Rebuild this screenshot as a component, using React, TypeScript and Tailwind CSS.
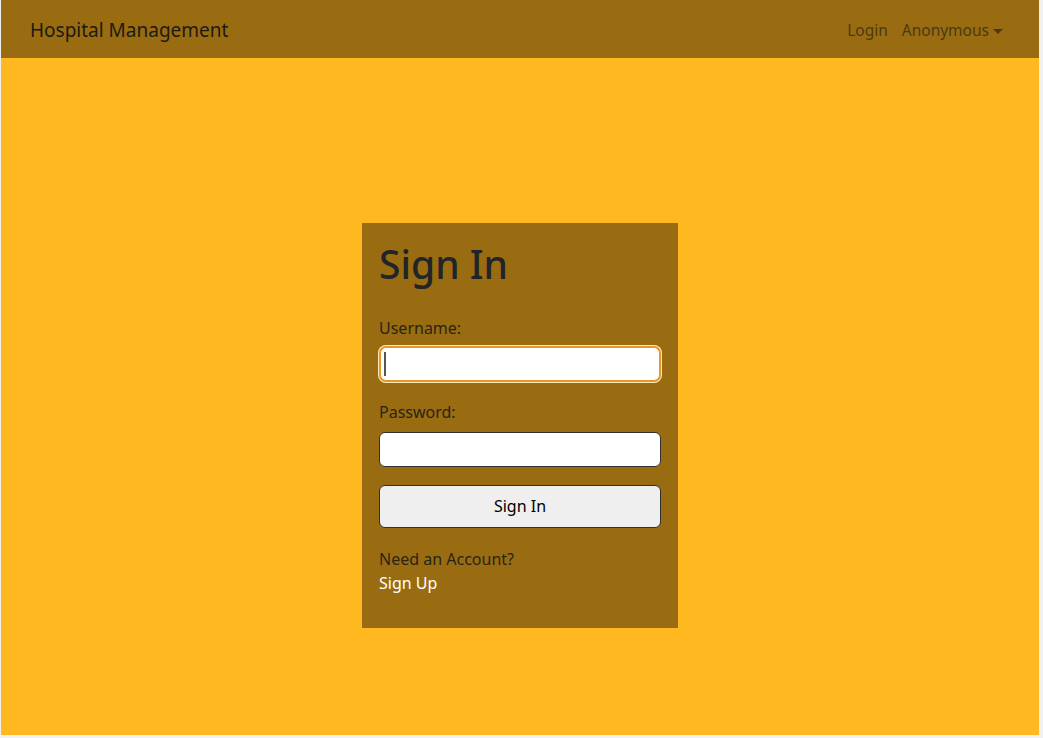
import React from "react";

const font = { fontFamily: '"Noto Sans", "Open Sans", sans-serif' };

const NavBar = () => {
  return (
    <nav className="flex h-[58px] items-center justify-between bg-[#996c11] pl-[29px] pr-[36px] pt-[3px]">
      <span className="text-[19px] text-[#1e1a10]">Hospital Management</span>
      <div className="flex items-center gap-[14px] text-[15.5px] text-[#4a3a14]">
        <span>Login</span>
        <span className="flex items-center">
          Anonymous
          <span className="ml-[4px] mt-[2px] h-0 w-0 border-x-[5px] border-t-[5px] border-x-transparent border-t-[#4a3a14]" />
        </span>
      </div>
    </nav>
  );
};

const SignInCard = () => {
  return (
    <div className="w-[316px] bg-[#996c11] px-[17px] pt-[18px] pb-[33px]">
      <h1 className="text-[39px] font-medium leading-[1.2] text-[#212529]">Sign In</h1>
      <label className="mt-[28px] block text-[16px] text-[#2a2414]">Username:</label>
      <div className="relative mt-[6px]">
        <input className="h-[36px] w-full rounded-[7px] border-2 border-[#e29b2a] bg-white px-[4px] outline-none ring-1 ring-[#ffe9b8]" />
        <span className="absolute left-[5px] top-[6px] h-[24px] w-[2px] bg-[#555]" />
      </div>
      <label className="mt-[18px] block text-[16px] text-[#2a2414]">Password:</label>
      <input
        type="password"
        className="mt-[8px] h-[35px] w-full rounded-[6px] border border-[#2f2f2f] bg-white outline-none"
      />
      <button className="mt-[18px] h-[43px] w-full rounded-[6px] border border-[#2f2f2f] bg-[#efefef] text-[16px] text-black">
        Sign In
      </button>
      <p className="mt-[19px] text-[16px] leading-[24px] text-[#2a2414]">Need an Account?</p>
      <a className="block text-[16px] leading-[24px] text-white">Sign Up</a>
    </div>
  );
};

export default function App() {
  return (
    <div className="h-[738px] w-[1043px] bg-[#f0f0f0]" style={font}>
      <div className="ml-[1px] flex h-[735px] w-[1038px] flex-col bg-[#ffb81f]">
        <NavBar />
        <div className="flex justify-center pt-[165px]">
          <SignInCard />
        </div>
      </div>
    </div>
  );
}
